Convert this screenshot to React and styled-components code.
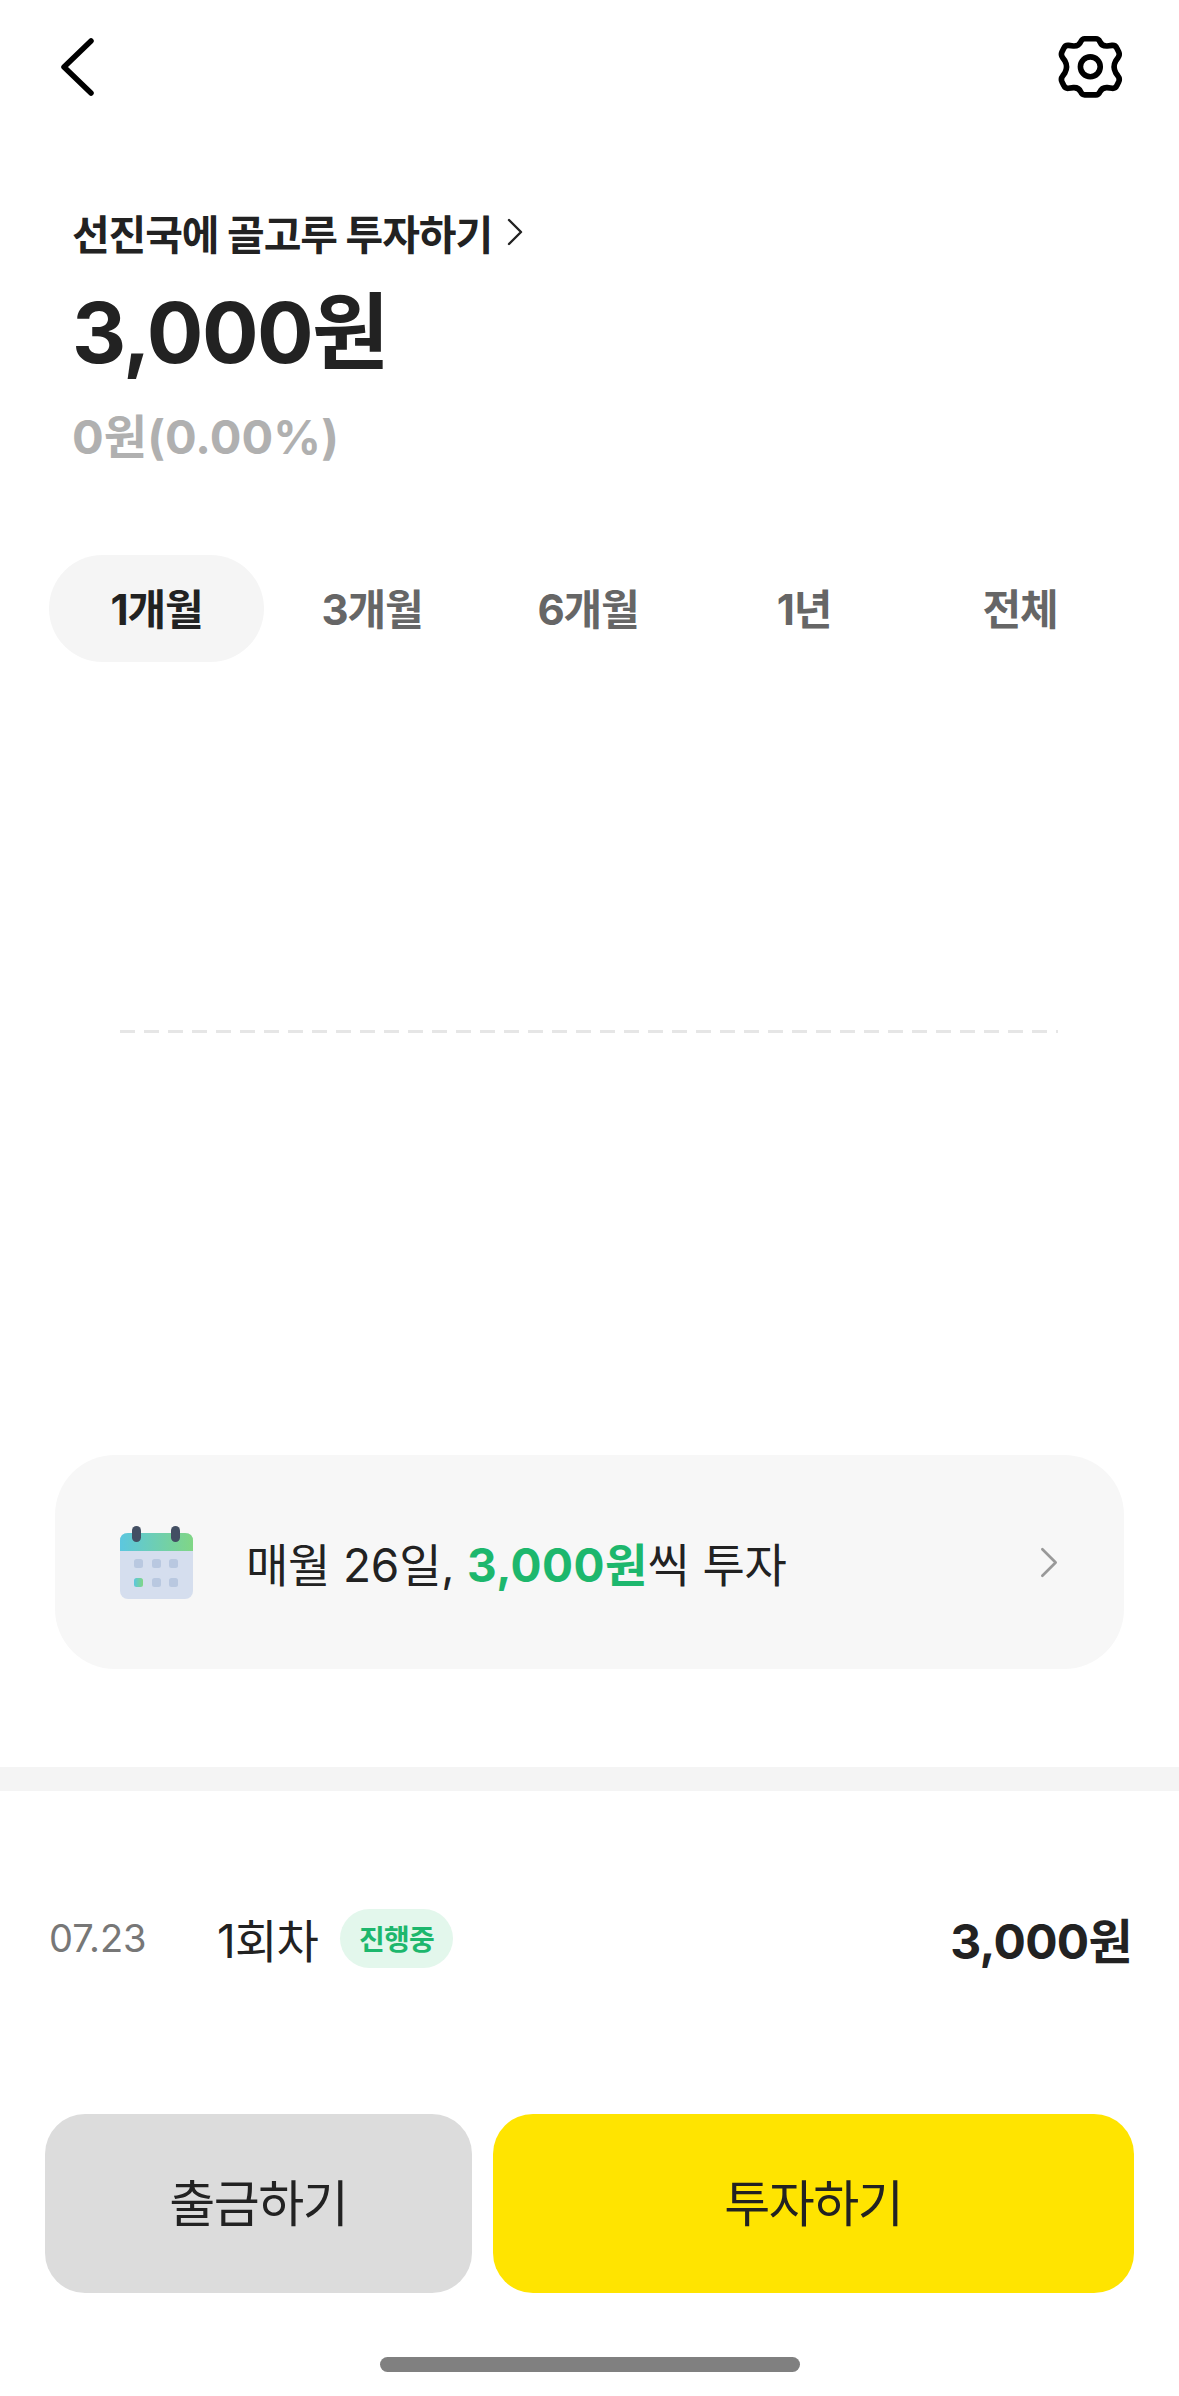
import React from "react";
import styled, { createGlobalStyle } from "styled-components";

const GlobalStyle = createGlobalStyle`
  html, body { margin: 0; padding: 0; background: #fff; }
  * { box-sizing: border-box; }
`;

const Page = styled.div`
  width: 1179px;
  height: 2396px;
  overflow: hidden;
  display: flex;
  flex-direction: column;
  background: #fff;
  color: #222;
  font-family: Inter, "Noto Sans CJK KR", sans-serif;
`;

const TopBar = styled.div`
  height: 134px;
  padding: 0 54px 0 58px;
  display: flex;
  align-items: center;
  justify-content: space-between;
`;

const Summary = styled.div`
  padding: 73px 0 0 72px;
  display: flex;
  flex-direction: column;
`;

const TitleLine = styled.div`
  height: 50px;
  display: flex;
  align-items: center;
  gap: 15px;
  font-size: 41px;
  font-weight: 700;
  letter-spacing: -1.1px;
`;

const Amount = styled.div`
  margin-top: 26px;
  height: 100px;
  line-height: 100px;
  font-size: 84px;
  font-weight: 700;
  letter-spacing: -1.6px;
`;

const Profit = styled.div`
  margin-top: 24px;
  height: 60px;
  line-height: 60px;
  font-size: 47px;
  font-weight: 700;
  letter-spacing: 0.1px;
  color: #b0b0b0;
`;

const Tabs = styled.div`
  margin-top: 88px;
  padding-left: 49px;
  display: grid;
  grid-template-columns: 215px repeat(4, 216px);
`;

const Tab = styled.div`
  height: 107px;
  padding-bottom: 5px;
  display: flex;
  align-items: center;
  justify-content: center;
  border-radius: 54px;
  font-size: 42px;
  font-weight: 700;
  letter-spacing: -1.2px;
  background: ${({ $active }) => ($active ? "#f5f5f5" : "transparent")};
  color: ${({ $active }) => ($active ? "#222" : "#666")};
`;

const Chart = styled.div`
  height: 793px;
  padding: 368px 121px 0 120px;
`;

const ZeroLine = styled.div`
  height: 3px;
  background: repeating-linear-gradient(to right, #e6e6e6 0 15px, transparent 15px 24px);
`;

const PlanCard = styled.div`
  margin: 0 55px;
  height: 214px;
  padding: 0 66px 0 65px;
  display: flex;
  align-items: center;
  border-radius: 60px;
  background: #f7f7f7;
`;

const PlanText = styled.div`
  margin-left: 53px;
  flex: 1;
  font-size: 46px;
  letter-spacing: -0.2px;
`;

const Green = styled.span`
  color: #1db76d;
  font-weight: 700;
  letter-spacing: 0.4px;
`;

const Divider = styled.div`
  margin-top: 98px;
  height: 24px;
  background: #f4f4f4;
`;

const Round = styled.div`
  height: 298px;
  padding: 0 47px 4px 49px;
  display: flex;
  align-items: center;
`;

const RoundDate = styled.div`
  width: 168px;
  font-size: 38px;
  color: #777;
`;

const RoundName = styled.div`
  font-size: 46px;
  letter-spacing: -0.8px;
`;

const Badge = styled.div`
  margin-left: 22px;
  width: 113px;
  height: 59px;
  display: flex;
  align-items: center;
  justify-content: center;
  border-radius: 30px;
  background: #e3f7ec;
  color: #1db76d;
  font-size: 28px;
  font-weight: 700;
  letter-spacing: -0.8px;
`;

const RoundAmount = styled.div`
  margin-left: auto;
  font-size: 48px;
  font-weight: 700;
  letter-spacing: -0.7px;
`;

const Actions = styled.div`
  margin-top: 25px;
  padding: 0 45px;
  display: flex;
  gap: 21px;
`;

const ActionButton = styled.div`
  width: ${({ $wide }) => ($wide ? "642px" : "427px")};
  height: 179px;
  padding-bottom: 8px;
  display: flex;
  align-items: center;
  justify-content: center;
  border-radius: 40px;
  background: ${({ $wide }) => ($wide ? "#ffe400" : "#dcdcdc")};
  font-size: 50px;
  letter-spacing: -1.5px;
`;

const HomeBar = styled.div`
  margin: 64px auto 0;
  width: 420px;
  height: 15px;
  border-radius: 8px;
  background: #808080;
`;

const BackIcon = () => (
  <svg width="42" height="66" viewBox="0 0 42 66" fill="none">
    <path d="M33 7 L6 33 L33 59" stroke="#000" strokeWidth="5.5" strokeLinecap="round" strokeLinejoin="round" />
  </svg>
);

const GearIcon = () => (
  <svg width="70" height="70" viewBox="100 65 212 207" fill="none">
    <path
      d="M190 83 H224 Q232 83 236 92 Q242 106 258 105 L273 103 Q283 102 287 111 L293 123 Q297 132 291 140 L284 150 Q274 168 284 186 L291 196 Q297 204 293 213 L287 225 Q283 234 273 233 L258 231 Q242 230 236 244 Q232 253 224 253 H190 Q182 253 178 244 Q172 230 156 231 L141 233 Q131 234 127 225 L121 213 Q117 204 123 196 L130 186 Q140 168 130 150 L123 140 Q117 132 121 123 L127 111 Q131 102 141 103 L156 105 Q172 106 178 92 Q182 83 190 83 Z"
      stroke="#000"
      strokeWidth="17"
      strokeLinejoin="round"
    />
    <circle cx="207" cy="168" r="30" stroke="#000" strokeWidth="17" />
  </svg>
);

const Chevron = ({ width, height, color, stroke }) => (
  <svg width={width} height={height} viewBox="0 0 16 28" fill="none">
    <path d="M2 2 L14 14 L2 26" stroke={color} strokeWidth={stroke} strokeLinecap="round" strokeLinejoin="round" />
  </svg>
);

const CalendarIcon = () => (
  <svg width="73" height="73" viewBox="0 0 73 73">
    <defs>
      <linearGradient id="band" x1="0" y1="0" x2="1" y2="0">
        <stop offset="0" stopColor="#5cc7df" />
        <stop offset="1" stopColor="#80d685" />
      </linearGradient>
    </defs>
    <rect y="7" width="73" height="66" rx="8" fill="#d5deee" />
    <path d="M0 25 V15 Q0 7 8 7 H65 Q73 7 73 15 V25 Z" fill="url(#band)" />
    <rect x="12" width="9" height="16" rx="4.5" fill="#434f63" />
    <rect x="51" width="9" height="16" rx="4.5" fill="#434f63" />
    {[14, 32, 49].map((x) =>
      [33, 52].map((y) => (
        <rect key={`${x}-${y}`} x={x} y={y} width="9" height="9" rx="2.5" fill={x === 14 && y === 52 ? "url(#band)" : "#b9c8e0"} />
      ))
    )}
  </svg>
);

const tabs = ["1개월", "3개월", "6개월", "1년", "전체"];

const App = () => {
  return (
    <Page>
      <GlobalStyle />
      <TopBar>
        <BackIcon />
        <GearIcon />
      </TopBar>
      <Summary>
        <TitleLine>
          선진국에 골고루 투자하기
          <Chevron width={16} height={28} color="#222" stroke={2.4} />
        </TitleLine>
        <Amount>3,000원</Amount>
        <Profit>0원(0.00%)</Profit>
      </Summary>
      <Tabs>
        {tabs.map((tab, i) => (
          <Tab key={tab} $active={i === 0}>
            {tab}
          </Tab>
        ))}
      </Tabs>
      <Chart>
        <ZeroLine />
      </Chart>
      <PlanCard>
        <CalendarIcon />
        <PlanText>
          매월 26일, <Green>3,000원</Green>씩 투자
        </PlanText>
        <Chevron width={18} height={31} color="#999" stroke={2.4} />
      </PlanCard>
      <Divider />
      <Round>
        <RoundDate>07.23</RoundDate>
        <RoundName>1회차</RoundName>
        <Badge>진행중</Badge>
        <RoundAmount>3,000원</RoundAmount>
      </Round>
      <Actions>
        <ActionButton>출금하기</ActionButton>
        <ActionButton $wide>투자하기</ActionButton>
      </Actions>
      <HomeBar />
    </Page>
  );
};

export default App;
